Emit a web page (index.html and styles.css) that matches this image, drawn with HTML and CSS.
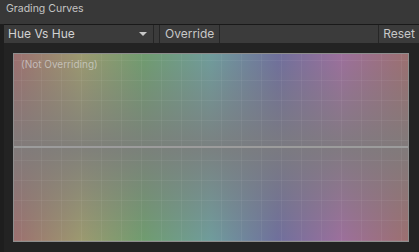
FILE: index.html
```html
<!DOCTYPE html>
<html lang="en">
<head>
    <meta charset="UTF-8">
    <title>Grading Curves</title>
    <link rel="stylesheet" href="styles.css">
</head>
<body>
    <header class="title-bar">Grading Curves</header>
    <div class="panel">
        <div class="toolbar">
            <div class="dropdown">
                <span>Hue Vs Hue</span>
                <span class="arrow"></span>
            </div>
            <div class="gap"></div>
            <div class="tool-btn">Override</div>
            <div class="spacer"></div>
            <div class="tool-btn reset">Reset</div>
        </div>
        <div class="curve-area">
            <div class="curve-box">
                <p class="curve-note">(Not Overriding)</p>
            </div>
        </div>
    </div>
</body>
</html>
```
FILE: styles.css
```css
body {
    margin: 0;
    background: #232323;
    font-family: Inter, "Noto Sans", sans-serif;
    color: #d2d2d2;
    width: 419px;
    height: 252px;
    overflow: hidden;
}
.title-bar {
    height: 24px;
    line-height: 17px;
    padding-left: 6px;
    background-color: #383838;
    color: #c4c4c4;
    font-size: 10.5px;
    box-sizing: border-box;
}
.panel {
    border-left: 4px solid #1e1e1e;
    height: 228px;
    box-sizing: border-box;
}
.toolbar {
    display: flex;
    height: 19px;
    border-top: 1px solid #191919;
    background-color: #3b3b3b;
    font-size: 12px;
    line-height: 18px;
    box-sizing: border-box;
}
.dropdown {
    width: 150px;
    display: flex;
    justify-content: space-between;
    align-items: center;
    padding: 0 6px 0 4px;
    border-right: 1px solid #262626;
    box-sizing: border-box;
}
.arrow {
    width: 0;
    height: 0;
    border-left: 4px solid transparent;
    border-right: 4px solid transparent;
    border-top: 4px solid #c8c8c8;
}
.gap {
    width: 5px;
}
.tool-btn {
    padding: 0 5px 0 5px;
    border-left: 1px solid #262626;
    border-right: 1px solid #262626;
    color: #c8c8c8;
}
.spacer {
    flex: 1;
}
.reset {
    border-right: none;
    padding: 0 4px 0 4px;
}
.curve-area {
    padding: 10px 10px 10px 9px;
}
.curve-box {
    height: 189px;
    border: 1px solid #8e8e8e;
    box-sizing: border-box;
    background:
        linear-gradient(to bottom, transparent calc(50% - 1px), #9c9c9c calc(50% - 1px), #9c9c9c calc(50% + 1px), transparent calc(50% + 1px)),
        linear-gradient(to right, rgba(255, 255, 255, 0.05) 1px, transparent 1px) 7px 0 / 20px 100%,
        linear-gradient(to bottom, rgba(255, 255, 255, 0.05) 1px, transparent 1px) 0 6px / 100% 20px,
        linear-gradient(to bottom, rgba(124, 124, 124, 0.3) 0%, rgba(124, 124, 124, 0.9) 50%, rgba(124, 124, 124, 0.3) 100%),
        linear-gradient(to right, #aa6a6a 0%, #aaa66a 17%, #6aaa6a 33%, #6aaaaa 50%, #6a6aaa 67%, #aa6aaa 83%, #aa6a6a 100%);
}
.curve-note {
    margin: 0;
    padding: 4px 0 0 7px;
    font-size: 10px;
    color: rgba(215, 215, 215, 0.7);
}
```
